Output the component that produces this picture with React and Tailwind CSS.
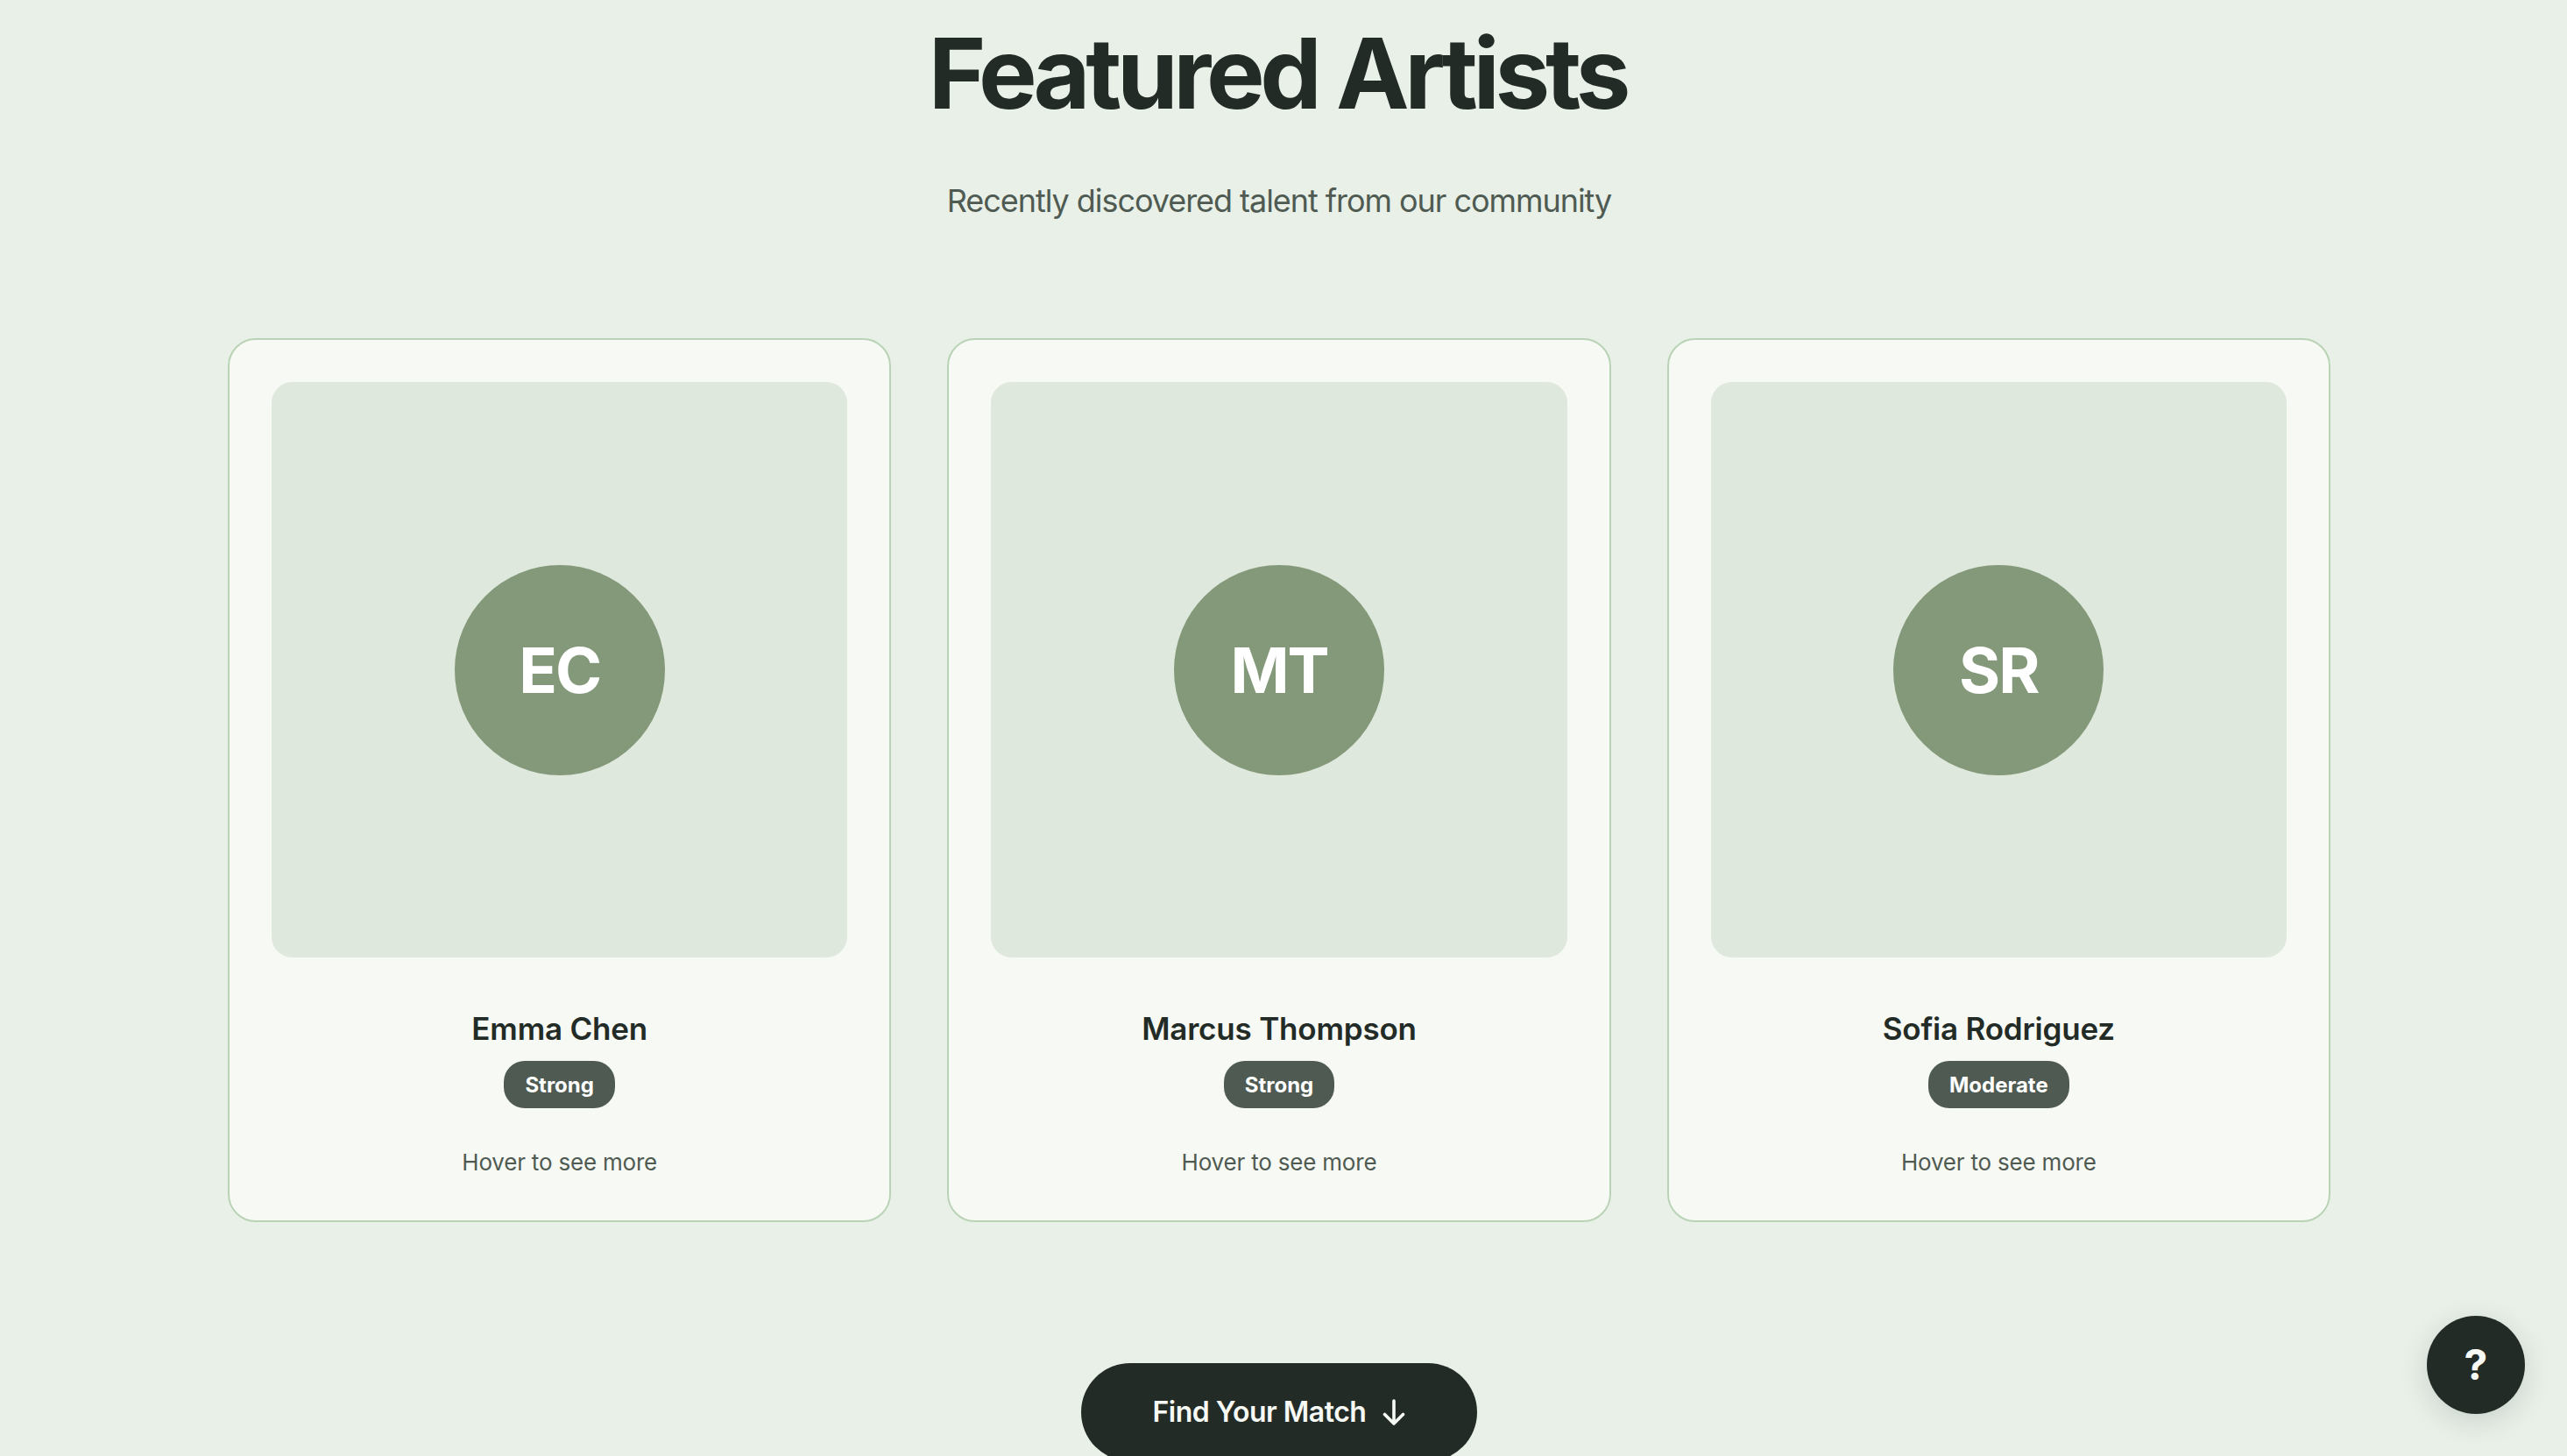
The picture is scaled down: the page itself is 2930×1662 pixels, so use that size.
const artists = [
  { initials: 'EC', name: 'Emma Chen', match: 'Strong' },
  { initials: 'MT', name: 'Marcus Thompson', match: 'Strong' },
  { initials: 'SR', name: 'Sofia Rodriguez', match: 'Moderate' },
];

export default function App() {
  return (
    <div className="relative h-[1662px] overflow-hidden bg-[#e8f0e8] pr-[10px] font-['Inter',sans-serif] text-[#232b27]">
      <div className="mx-auto flex w-[2400px] flex-col items-center">
        <h1 className="mt-[16px] pr-[4px] text-[112px] leading-[134px] font-bold tracking-[-5.3px]">Featured Artists</h1>
        <p className="mt-[49px] text-[36px] leading-[60px] tracking-[-1.05px] text-[#4f5b52]">Recently discovered talent from our community</p>

        <div className="mt-[127px] grid w-full grid-cols-3 gap-[64px]">
          {artists.map((artist) => (
            <ArtistCard key={artist.initials} {...artist} />
          ))}
        </div>

        <button className="mt-[161px] flex h-[112px] w-[452px] shrink-0 items-center justify-center gap-[19px] rounded-full bg-[#232b27] text-[32px] font-semibold tracking-[-0.5px] text-[#f7f9f4]">
          Find Your Match
          <svg viewBox="0 0 26 30" className="h-[30px] w-[26px]" fill="none" stroke="currentColor" strokeWidth="3.6" strokeLinecap="round" strokeLinejoin="round">
            <path d="M13 2v26M2.5 17.5 13 28l10.5-10.5" />
          </svg>
        </button>
      </div>

      {/* Help button */}
      <button className="absolute right-[48px] bottom-[48px] flex h-[112px] w-[112px] items-center justify-center rounded-full bg-[#232b27] text-[48px] font-bold text-[#f7f9f4] shadow-[0_8px_32px_rgba(35,43,39,0.15)]">
        ?
      </button>
    </div>
  );
}

function ArtistCard({ initials, name, match }) {
  return (
    <div className="flex flex-col items-center rounded-[32px] border-2 border-[#bad3b6] bg-[#f7f9f4] px-[48px] pt-[48px] pb-[45px]">
      <div className="flex aspect-square w-full items-center justify-center rounded-[24px] bg-[#dee8dc]">
        <div className="flex h-[240px] w-[240px] items-center justify-center rounded-full bg-[#84997a] text-[72px] font-[650] tracking-[-2px] text-white">
          {initials}
        </div>
      </div>
      <h3 className="mt-[54px] text-[35px] leading-[54px] font-semibold tracking-[-0.2px]">{name}</h3>
      <span className="mt-[10px] rounded-[24px] bg-[#4f5b52] px-[24px] pt-[10px] pb-[8px] text-[24px] leading-[36px] font-bold text-white">{match}</span>
      <p className="mt-[41px] text-[26px] leading-[42px] tracking-[-0.2px] text-[#4f5b52]">Hover to see more</p>
    </div>
  );
}
